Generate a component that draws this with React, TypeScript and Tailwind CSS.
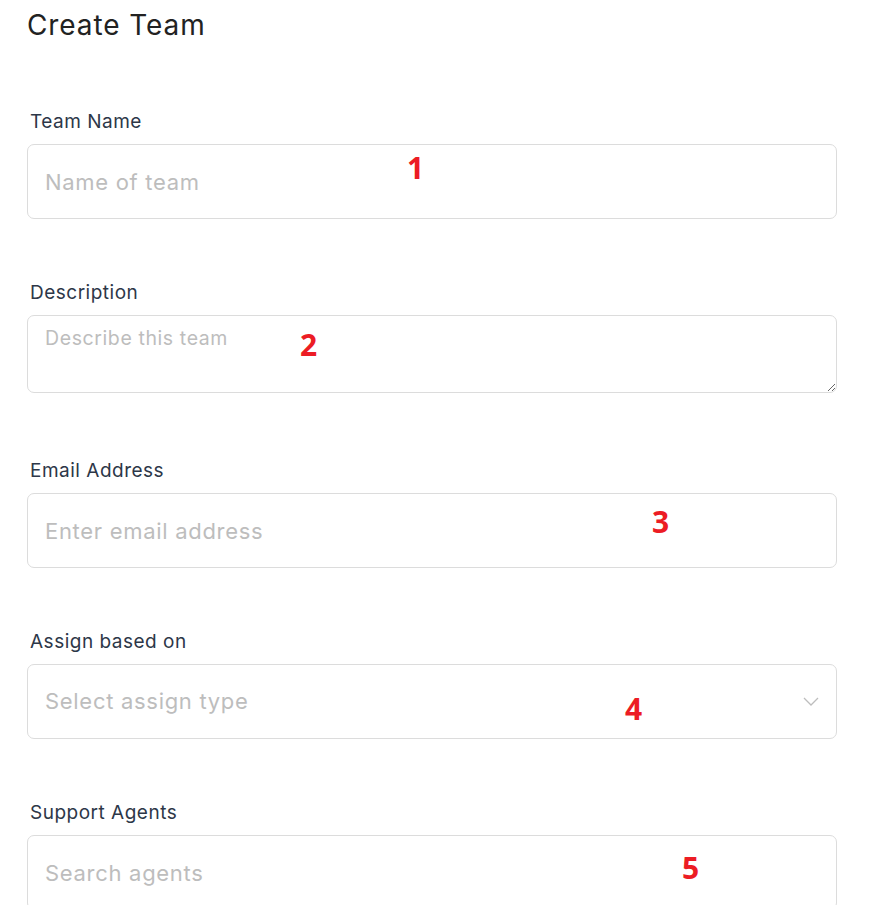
import React from "react";

const font = { fontFamily: "Inter, 'Noto Sans', sans-serif" };

function Field({ label, children }: { label: string; children: React.ReactNode }) {
  return (
    <div className="flex flex-col gap-[10px]">
      <label className="block pl-[3px] text-[19px] leading-[24px] tracking-[0.5px] text-[#2d3748]">{label}</label>
      {children}
    </div>
  );
}

function Mark({ n, className }: { n: string; className: string }) {
  return (
    <span
      className={`absolute text-[30px] font-bold leading-none text-[#ec1c24] ${className}`}
      style={{ fontFamily: "'Open Sans', 'Liberation Sans', sans-serif" }}
    >
      {n}
    </span>
  );
}

export default function App() {
  const inputCls =
    "block w-full h-[75px] rounded-[7px] border border-[#dcdcdc] bg-white px-[17px] text-[22px] tracking-[0.7px] text-[#333] placeholder:text-[#bdbdbd] outline-none";
  return (
    <div className="relative min-h-[905px] overflow-hidden bg-white pl-[27px] pr-[44px]" style={font}>
      <h1 className="pt-[8px] text-[28px] leading-[34px] tracking-[0.9px] text-[#222] font-normal">Create Team</h1>

      <form className="mt-[68px] flex flex-col gap-[62px]">
        <Field label="Team Name">
          <input className={inputCls} placeholder="Name of team" />
        </Field>

        <Field label="Description">
          <textarea
            className="block w-full h-[78px] rounded-[7px] border border-[#dcdcdc] bg-white px-[17px] pt-[9px] text-[19.5px] leading-[26px] tracking-[0.6px] text-[#333] placeholder:text-[#bdbdbd] outline-none"
            placeholder="Describe this team"
          />
        </Field>

        <div className="mt-[4px]">
          <Field label="Email Address">
            <input className={inputCls} placeholder="Enter email address" />
          </Field>
        </div>

        <Field label="Assign based on">
          <div className={`${inputCls} flex items-center justify-between`}>
            <span className="text-[#bdbdbd]">Select assign type</span>
            <svg width="16" height="9" viewBox="0 0 16 9">
              <path d="M1 1 L8 8 L15 1" fill="none" stroke="#bdbdbd" strokeWidth="1.3" />
            </svg>
          </div>
        </Field>

        <Field label="Support Agents">
          <input className={inputCls} placeholder="Search agents" />
        </Field>
      </form>

      <Mark n="1" className="left-[407px] top-[153px]" />
      <Mark n="2" className="left-[300px] top-[330px]" />
      <Mark n="3" className="left-[652px] top-[507px]" />
      <Mark n="4" className="left-[625px] top-[694px]" />
      <Mark n="5" className="left-[682px] top-[853px]" />
    </div>
  );
}
